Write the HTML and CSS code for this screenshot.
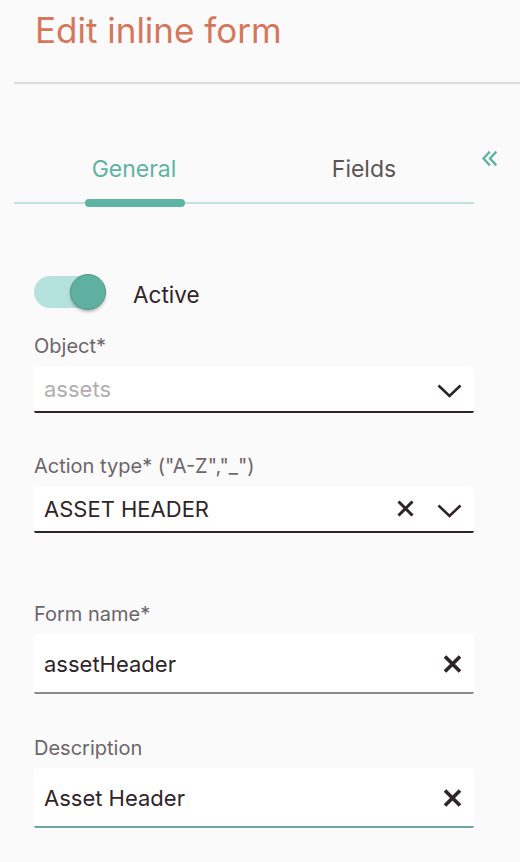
FILE: index.html
```html
<!DOCTYPE html>
<html lang="en">
<head>
<meta charset="utf-8">
<title>Edit inline form</title>
<link rel="stylesheet" href="styles.css">
</head>
<body>
<header class="header">
  <h1 class="title">Edit inline form</h1>
</header>

<nav class="tabs-bar">
  <div class="tabs">
    <button class="tab tab-active" type="button">General</button>
    <button class="tab" type="button">Fields</button>
    <span class="tab-indicator"></span>
  </div>
  <button class="collapse" type="button" aria-label="Collapse">
    <svg width="16" height="15" viewBox="0 0 16 15" fill="none" stroke="#5fb3a3" stroke-width="2.4" stroke-linecap="square" stroke-linejoin="miter">
      <path d="M8 1.5 L2.5 7.5 L8 13.5"/>
      <path d="M14.5 1.5 L9 7.5 L14.5 13.5"/>
    </svg>
  </button>
</nav>

<main class="form">
  <div class="toggle-row">
    <span class="toggle"><span class="toggle-track"></span><span class="toggle-knob"></span></span>
    <span class="toggle-label">Active</span>
  </div>

  <div class="field field-object">
    <label class="field-label">Object*</label>
    <div class="select">
      <span class="value placeholder">assets</span>
      <svg class="chev" width="25" height="14" viewBox="0 0 25 14" fill="none" stroke="#2f2529" stroke-width="2.6"><path d="M1.5 1.5 L12.5 12 L23.5 1.5"/></svg>
    </div>
  </div>

  <div class="field field-action">
    <label class="field-label">Action type* ("A-Z","_")</label>
    <div class="select">
      <span class="value">ASSET HEADER</span>
      <svg class="clear-sm" width="17" height="17" viewBox="0 0 17 17" fill="none" stroke="#2f2529" stroke-width="3"><path d="M1.5 1.5 L15.5 15.5 M15.5 1.5 L1.5 15.5"/></svg>
      <svg class="chev" width="25" height="14" viewBox="0 0 25 14" fill="none" stroke="#2f2529" stroke-width="2.6"><path d="M1.5 1.5 L12.5 12 L23.5 1.5"/></svg>
    </div>
  </div>

  <div class="field field-name">
    <label class="field-label">Form name*</label>
    <div class="text-input input-gray">
      <span class="value">assetHeader</span>
      <svg class="clear" width="19" height="18" viewBox="0 0 19 18" fill="none" stroke="#2f2529" stroke-width="3.6"><path d="M2 1.5 L17 16.5 M17 1.5 L2 16.5"/></svg>
    </div>
  </div>

  <div class="field field-desc">
    <label class="field-label">Description</label>
    <div class="text-input input-teal">
      <span class="value">Asset Header</span>
      <svg class="clear" width="19" height="18" viewBox="0 0 19 18" fill="none" stroke="#2f2529" stroke-width="3.6"><path d="M2 1.5 L17 16.5 M17 1.5 L2 16.5"/></svg>
    </div>
  </div>
</main>
</body>
</html>
```

FILE: styles.css
```css
* { box-sizing: border-box; }

html, body {
  margin: 0;
  padding: 0;
  background: #fafafa;
  font-family: Inter, "Noto Sans", sans-serif;
  color: #2f2529;
}

.header {
  margin-left: 14px;
  padding-left: 21px;
  height: 84px;
  border-bottom: 2px solid #dcdcdc;
}

.title {
  margin: 0;
  padding-top: 10px;
  font-size: 35px;
  line-height: 40px;
  font-weight: 400;
  color: #d4775b;
}

.tabs-bar {
  display: flex;
  align-items: flex-start;
  margin-top: 70px;
}

.tabs {
  position: relative;
  display: flex;
  width: 460px;
  margin-left: 14px;
  padding-left: 5px;
  border-bottom: 2px solid #bfe3dc;
}

.tab {
  flex: 0 0 230px;
  background: none;
  border: 0;
  padding: 0 0 18px;
  font-family: inherit;
  font-size: 23px;
  line-height: 30px;
  color: #5c5458;
  text-align: center;
}

.tab-active { color: #5fb3a3; }

.tab-indicator {
  position: absolute;
  left: 71px;
  bottom: -5px;
  width: 100px;
  height: 8px;
  border-radius: 4px;
  background: #5fb3a3;
}

.collapse {
  background: none;
  border: 0;
  padding: 0;
  margin: -3px 0 0 7px;
  width: 16px;
  height: 15px;
  display: flex;
}

.form {
  padding: 0 46px 0 34px;
}

.toggle-row {
  display: flex;
  align-items: flex-start;
  margin-top: 70px;
  height: 36px;
}

.toggle {
  position: relative;
  display: block;
  width: 72px;
  height: 36px;
}

.toggle-track {
  display: block;
  margin-top: 2px;
  width: 66px;
  height: 32px;
  border-radius: 16px;
  background: #b5e2dd;
}

.toggle-knob {
  position: absolute;
  right: 0;
  top: 0;
  width: 36px;
  height: 36px;
  border-radius: 50%;
  background: #5fb0a0;
  border: 1.5px solid #4f9a8b;
  box-shadow: 0 2px 3px rgba(0, 0, 0, 0.25);
}

.toggle-label {
  margin: 6px 0 0 27px;
  font-size: 22.5px;
  line-height: 30px;
  color: #2f2529;
}

.field { display: block; }

.field-label {
  display: block;
  font-size: 20px;
  line-height: 26px;
  color: #6d6569;
  margin-bottom: 7px;
}

.field-object { margin-top: 23px; }
.field-action { margin-top: 40px; }
.field-name { margin-top: 68px; }
.field-desc { margin-top: 41px; }

.select, .text-input {
  display: flex;
  align-items: center;
  background: #ffffff;
  border-radius: 4px 4px 2px 2px;
  padding: 0 12px 0 10px;
}

.select {
  height: 47px;
  border-bottom: 2px solid #2e2529;
}

.text-input {
  height: 60px;
  padding-top: 2px;
  padding-right: 12px;
}

.input-gray { border-bottom: 2px solid #8e8a8c; }
.input-teal { border-bottom: 2.5px solid #6fa59e; }

.value {
  flex: 1;
  font-size: 22px;
  line-height: 30px;
  color: #2f2529;
}

.placeholder { color: #b3adb0; }

.chev { flex: none; margin-top: 4px; }
.clear-sm { flex: none; margin-right: 23px; }
.clear { flex: none; }
```
